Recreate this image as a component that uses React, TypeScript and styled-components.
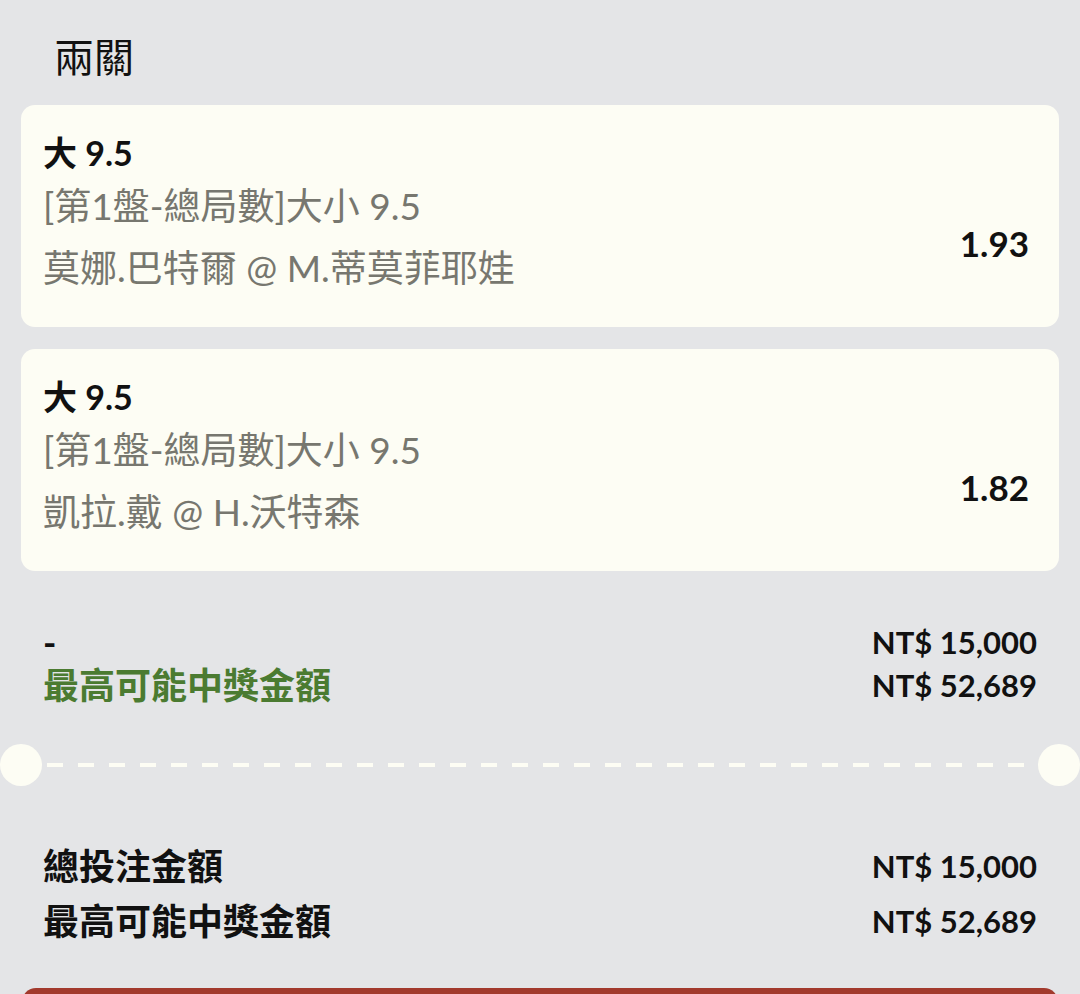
import styled, { createGlobalStyle } from 'styled-components';

const GlobalStyle = createGlobalStyle`
  html, body {
    margin: 0;
    padding: 0;
    background: #e4e5e7;
    overflow: hidden;
  }
  body {
    font-family: 'Lato', 'Noto Sans CJK TC', sans-serif;
    color: #111;
  }
`;

interface Leg {
  pick: string;
  market: string;
  match: string;
  odds: string;
}

const legs: Leg[] = [
  {
    pick: '大 9.5',
    market: '[第1盤-總局數]大小 9.5',
    match: '莫娜.巴特爾 @ M.蒂莫菲耶娃',
    odds: '1.93',
  },
  {
    pick: '大 9.5',
    market: '[第1盤-總局數]大小 9.5',
    match: '凱拉.戴 @ H.沃特森',
    odds: '1.82',
  },
];

const App = () => {
  return (
    <>
      <GlobalStyle />
      <Page>
        <Heading>兩關</Heading>
        <LegList>
          {legs.map((leg, idx) => (
            <LegCard key={`leg_${idx}`}>
              <LegInfo>
                <Pick>{leg.pick}</Pick>
                <Market>{leg.market}</Market>
                <Match>{leg.match}</Match>
              </LegInfo>
              <Odds>{leg.odds}</Odds>
            </LegCard>
          ))}
        </LegList>

        <Summary $lineHeight={43}>
          <SummaryRow>
            <span>-</span>
            <Amount>NT$ 15,000</Amount>
          </SummaryRow>
          <SummaryRow>
            <WinLabel>最高可能中獎金額</WinLabel>
            <Amount>NT$ 52,689</Amount>
          </SummaryRow>
        </Summary>

        <Divider>
          <Notch />
          <Dashes />
          <Notch />
        </Divider>

        <Totals $lineHeight={55}>
          <SummaryRow>
            <span>總投注金額</span>
            <Amount>NT$ 15,000</Amount>
          </SummaryRow>
          <SummaryRow>
            <span>最高可能中獎金額</span>
            <Amount>NT$ 52,689</Amount>
          </SummaryRow>
        </Totals>

        <SubmitBar />
      </Page>
    </>
  );
};

const Page = styled.div`
  display: flex;
  flex-direction: column;
  width: 1080px;
  height: 994px;
  overflow: hidden;
`;

const Heading = styled.h1`
  margin: 0;
  padding: 31px 0 0 54px;
  height: 105px;
  flex-shrink: 0;
  box-sizing: border-box;
  font-family: 'Noto Sans CJK TC', sans-serif;
  font-size: 40px;
  font-weight: 400;
  line-height: 48px;
  color: #111;
`;

const LegList = styled.div`
  display: flex;
  flex-direction: column;
  gap: 22px;
  margin: 0 21px;
`;

const LegCard = styled.div`
  display: flex;
  align-items: flex-start;
  justify-content: space-between;
  height: 222px;
  flex-shrink: 0;
  box-sizing: border-box;
  padding: 24px 30px 0 22px;
  background: #fdfdf4;
  border-radius: 14px;
`;

const LegInfo = styled.div`
  display: flex;
  flex-direction: column;
`;

const Pick = styled.div`
  font-size: 34px;
  font-weight: 700;
  line-height: 48px;
  color: #111;
`;

const Market = styled.div`
  font-size: 37px;
  font-weight: 400;
  line-height: 58px;
  color: #77776f;
`;

const Match = styled(Market)`
  margin-top: 4px;
`;

const Odds = styled.div`
  align-self: center;
  margin-top: 30px;
  font-size: 35px;
  font-weight: 700;
  color: #111;
`;

const Summary = styled.div<{ $lineHeight: number }>`
  display: flex;
  flex-direction: column;
  padding: 0 43px;
  margin-top: 50px;
  font-size: 36px;
  font-weight: 700;
  line-height: ${(p) => p.$lineHeight}px;
`;

const Totals = styled(Summary)`
  margin-top: 53px;
`;

const SummaryRow = styled.div`
  display: flex;
  justify-content: space-between;
  align-items: center;
`;

const WinLabel = styled.span`
  color: #4b7b31;
`;

const Amount = styled.span`
  font-size: 31px;
`;

const Divider = styled.div`
  display: flex;
  align-items: center;
  margin-top: 37px;
  height: 42px;
  flex-shrink: 0;
`;

const Notch = styled.div`
  width: 42px;
  height: 42px;
  border-radius: 50%;
  background: #fdfdf4;
  flex-shrink: 0;
`;

const Dashes = styled.div`
  flex: 1;
  height: 4px;
  margin: 0 5px;
  background: repeating-linear-gradient(
    to right,
    #fdfdf4 0 16px,
    transparent 16px 31px
  );
`;

const SubmitBar = styled.div`
  margin: 39px 22px 0;
  height: 60px;
  flex-shrink: 0;
  background: #a23a2d;
  border-radius: 14px 14px 0 0;
`;

export default App;
